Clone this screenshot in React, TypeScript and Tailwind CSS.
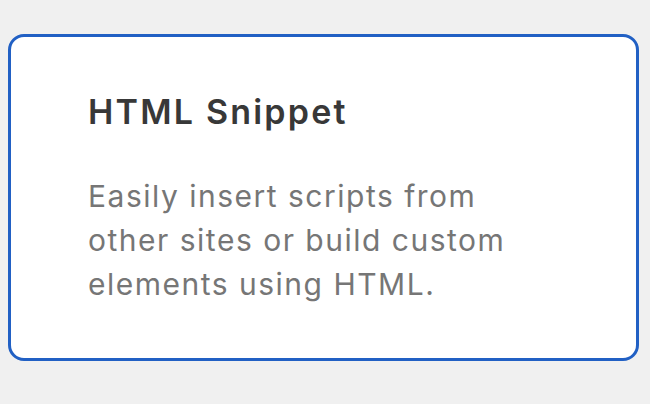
export default function App() {
  return (
    <div className="w-[650px] h-[404px] bg-[#f0f0f0] pt-[34px] pl-[8px]" style={{ fontFamily: 'Inter, "Liberation Sans", sans-serif' }}>
      <div className="w-[631px] h-[327px] bg-white border-[3px] border-[#2160c4] rounded-[16px] pt-[55px] pl-[77px]">
        <h2 className="text-[34px] leading-[40px] font-semibold tracking-[2.2px] text-[#383838]">HTML Snippet</h2>
        <p className="mt-[42px] text-[30px] leading-[44px] tracking-[1.5px] text-[#767676]">
          <span className="block">Easily insert scripts from</span>
          <span className="block">other sites or build custom</span>
          <span className="block">elements using HTML.</span>
        </p>
      </div>
    </div>
  );
}
